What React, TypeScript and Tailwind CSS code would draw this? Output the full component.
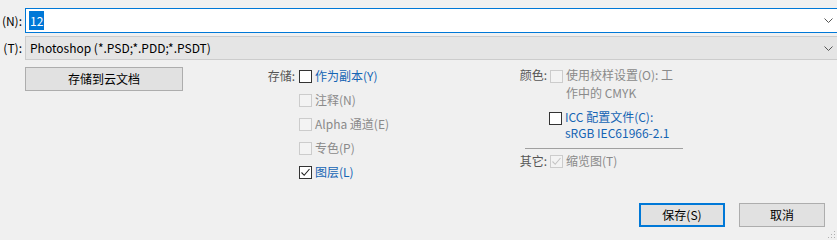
import type { ReactNode } from 'react';

const FONT = "font-['Noto_Sans_CJK_SC',_'Noto_Sans',_sans-serif]";

function Chevron({ color = '#555555' }: { color?: string }) {
  return (
    <svg width="9" height="5" viewBox="0 0 9 5" className="shrink-0">
      <path d="M0.5 0.5 L4.5 4.5 L8.5 0.5" fill="none" stroke={color} strokeWidth="1" />
    </svg>
  );
}

function Box({ checked = false, disabled = false }: { checked?: boolean; disabled?: boolean }) {
  return (
    <span
      className={
        disabled
          ? 'flex h-[13px] w-[13px] shrink-0 items-center justify-center border border-[#cccccc] bg-[#f3f3f3]'
          : 'flex h-[13px] w-[13px] shrink-0 items-center justify-center border border-[#333333] bg-white'
      }
    >
      {checked && (
        <svg width="11" height="11" viewBox="0 0 11 11">
          <path
            d="M1.5 5.5 L4.2 8.3 L9.5 2"
            fill="none"
            stroke={disabled ? '#c4c4c4' : '#222222'}
            strokeWidth="1.1"
          />
        </svg>
      )}
    </span>
  );
}

function OptRow({ label, children }: { label?: string; children: ReactNode }) {
  return (
    <div className="flex h-[24px] items-center">
      <span className="w-[56px] pr-[4px] text-right text-[#555555]">{label}</span>
      {children}
    </div>
  );
}

export default function App() {
  return (
    <div className={`${FONT} relative h-[240px] w-[837px] overflow-hidden bg-[#f0f0f0] text-[12px] leading-[16px] text-black`}>
      {/* file name */}
      <div className="mt-[8px] flex h-[25px] items-center">
        <div className="flex w-[25px] shrink-0 justify-end whitespace-nowrap pr-[3px]">
          <span>(N):</span>
        </div>
        <div className="-mr-[6px] flex h-[25px] flex-1 items-center border border-[#0078d7] bg-white pl-[3px] pr-[9px]">
          <span className="bg-[#0078d7] px-[1px] leading-[19px] text-white">12</span>
          <span className="flex-1" />
          <Chevron />
        </div>
      </div>

      {/* format */}
      <div className="mt-[3px] flex h-[24px] items-center">
        <div className="flex w-[25px] shrink-0 justify-end whitespace-nowrap pr-[3px]">
          <span>(T):</span>
        </div>
        <div className="-mr-[6px] flex h-[24px] flex-1 items-center border border-[#cccccc] bg-[#e5e5e5] pl-[4px] pr-[9px]">
          <span>Photoshop (*.PSD;*.PDD;*.PSDT)</span>
          <span className="flex-1" />
          <Chevron />
        </div>
      </div>

      <div className="mt-[4px] flex">
        {/* cloud */}
        <div className="ml-[25px] mt-[3px] w-[158px]">
          <div className="flex h-[24px] items-center justify-center border border-[#adadad] bg-[#e1e1e1]">
            存储到云文档
          </div>
        </div>

        {/* save options */}
        <div className="ml-[60px] flex w-[272px] flex-col">
          <OptRow label="存储:">
            <Box />
            <span className="ml-[3px] text-[#1464b4]">作为副本(Y)</span>
          </OptRow>
          <OptRow>
            <Box disabled />
            <span className="ml-[3px] text-[#8a8a8a]">注释(N)</span>
          </OptRow>
          <OptRow>
            <Box disabled />
            <span className="ml-[3px] text-[#8a8a8a]">Alpha 通道(E)</span>
          </OptRow>
          <OptRow>
            <Box disabled />
            <span className="ml-[3px] text-[#8a8a8a]">专色(P)</span>
          </OptRow>
          <OptRow>
            <Box checked />
            <span className="ml-[3px] text-[#1464b4]">图层(L)</span>
          </OptRow>
        </div>

        {/* colour / other */}
        <div className="flex w-[200px] flex-col">
          <div className="mt-[2px] flex items-start leading-[18px]">
            <span className="w-[35px] pr-[3px] text-right text-[#555555]">颜色:</span>
            <span className="mt-[4px]">
              <Box disabled />
            </span>
            <span className="ml-[3px] text-[#8a8a8a]">
              使用校样设置(O): 工
              <br />
              作中的 CMYK
            </span>
          </div>
          <div className="mt-[7px] flex items-start">
            <span className="w-[34px]" />
            <span className="mt-[3px]">
              <Box />
            </span>
            <span className="ml-[3px] text-[#1464b4]">
              ICC 配置文件(C):
              <br />
              sRGB IEC61966-2.1
            </span>
          </div>
          <div className="ml-[10px] mt-[7px] h-px w-[158px] bg-[#a0a0a0]" />
          <div className="flex h-[24px] items-center">
            <span className="w-[35px] pr-[3px] text-right text-[#555555]">其它:</span>
            <Box checked disabled />
            <span className="ml-[3px] text-[#8a8a8a]">缩览图(T)</span>
          </div>
        </div>
      </div>

      {/* actions */}
      <div className="mt-[19px] flex justify-end gap-[14px] pr-[12px]">
        <div className="flex h-[24px] w-[86px] items-center justify-center border-2 border-[#0078d7] bg-[#e1e1e1]">
          保存(S)
        </div>
        <div className="flex h-[24px] w-[86px] items-center justify-center border border-[#adadad] bg-[#e1e1e1]">
          取消
        </div>
      </div>

      <svg width="8" height="8" viewBox="0 0 8 8" className="absolute bottom-[1px] right-[1px]">
        <rect x="6" y="0" width="1" height="1" fill="#b0b0b0" />
        <rect x="3" y="3" width="1" height="1" fill="#b0b0b0" />
        <rect x="6" y="3" width="1" height="1" fill="#b0b0b0" />
        <rect x="0" y="6" width="1" height="1" fill="#b0b0b0" />
        <rect x="3" y="6" width="1" height="1" fill="#b0b0b0" />
        <rect x="6" y="6" width="1" height="1" fill="#b0b0b0" />
      </svg>
    </div>
  );
}
